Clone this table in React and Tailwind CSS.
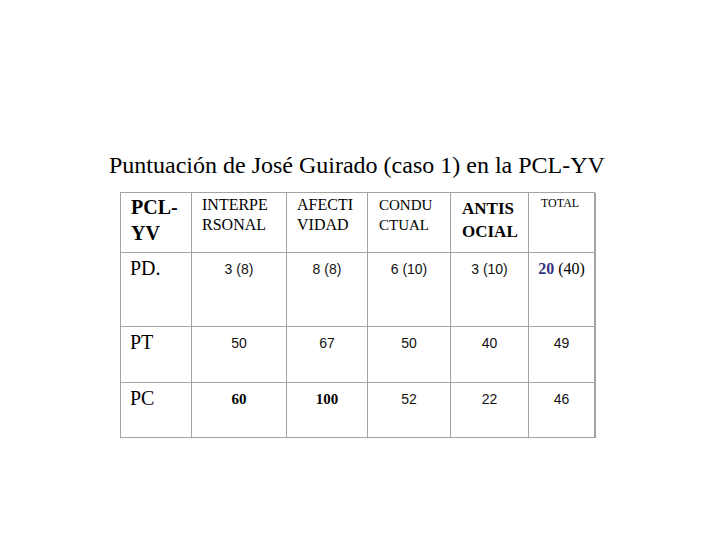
import React from "react";

export default function App() {
  const sans = "[font-family:Liberation_Sans,Arial,sans-serif] text-[14px] leading-[20px] text-[#111]";
  const cell = "border-r border-b border-[#a3a3a3]";
  const last = "border-r-2 border-b border-[#a3a3a3]";
  const rows = [
    { label: "PD.", vals: ["3 (8)", "8 (8)", "6 (10)", "3 (10)"], h: "h-[74px]", kind: "pd" },
    { label: "PT", vals: ["50", "67", "50", "40"], total: "49", h: "h-[56px]", kind: "pt" },
    { label: "PC", vals: ["60", "100", "52", "22"], total: "46", h: "h-[55px]", kind: "pc" },
  ];
  return (
    <div className="w-[720px] h-[540px] bg-white text-black [font-family:Liberation_Serif,serif]">
      <div className="pt-[151px] pl-[109px] text-[24px] leading-[29px] whitespace-nowrap">
        Puntuación de José Guirado (caso 1) en la PCL-YV
      </div>
      <div className="ml-[120px] mt-[12px] w-[475px] grid grid-cols-[71px_95px_81px_83px_78px_67px] border-l border-t border-[#a3a3a3]">
        <div className={`${cell} h-[60px] pl-[10px] pt-[1px] text-[20px] leading-[26px] font-bold`}>
          PCL-<br />YV
        </div>
        <div className={`${cell} pl-[10px] pt-[2px] text-[16px] leading-[20px]`}>
          INTERPE<br />RSONAL
        </div>
        <div className={`${cell} pl-[10px] pt-[2px] text-[16px] leading-[20px]`}>
          AFECTI<br />VIDAD
        </div>
        <div className={`${cell} pl-[11px] pt-[2px] text-[15px] leading-[20px]`}>
          CONDU<br />CTUAL
        </div>
        <div className={`${cell} pl-[11px] pt-[4px] text-[17px] leading-[23px] font-bold`}>
          ANTIS<br />OCIAL
        </div>
        <div className={`${last} pl-[12px] pt-[2px] text-[12px] leading-[16px]`}>TOTAL</div>

        {rows.map((r) => (
          <React.Fragment key={r.label}>
            <div className={`${cell} ${r.h} pl-[9px] pt-[3px] text-[20px] leading-[24px]`}>{r.label}</div>
            {r.vals.map((v, i) => {
              const boldSerif = r.kind === "pc" && i < 2;
              return (
                <div key={i} className={`${cell} pt-[4px] text-center`}>
                  {boldSerif ? (
                    <span className="text-[15px] leading-[20px] font-bold">{v}</span>
                  ) : (
                    <span className={sans}>{v}</span>
                  )}
                </div>
              );
            })}
            <div className={`${last} pt-[4px] text-center`}>
              {r.kind === "pd" ? (
                <span className="text-[16px] leading-[20px]">
                  <span className="font-bold text-[#333380]">20</span> (40)
                </span>
              ) : (
                <span className={sans}>{r.total}</span>
              )}
            </div>
          </React.Fragment>
        ))}
      </div>
    </div>
  );
}
